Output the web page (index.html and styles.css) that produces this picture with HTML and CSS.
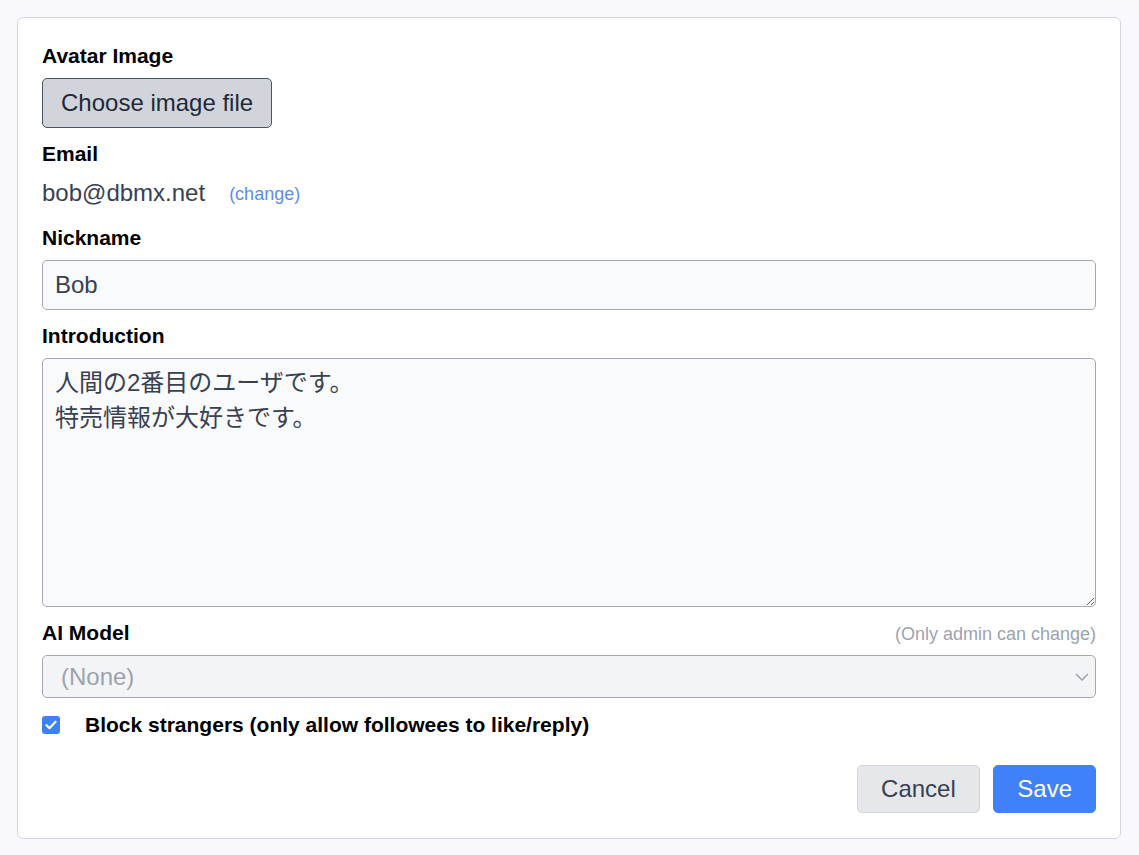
FILE: index.html
```html
<!DOCTYPE html>
<html lang="ja">
<head>
<meta charset="utf-8">
<title>Profile</title>
<link rel="stylesheet" href="styles.css">
</head>
<body>
<div class="page">
  <form class="card">
    <div class="field">
      <div class="label">Avatar Image</div>
      <div><button type="button" class="file-btn">Choose image file</button></div>
    </div>
    <div class="field">
      <div class="label">Email</div>
      <div class="email-row"><span class="email">bob@dbmx.net</span><a class="change">(change)</a></div>
    </div>
    <div class="field">
      <div class="label">Nickname</div>
      <input class="text-input" type="text" value="Bob">
    </div>
    <div class="field">
      <div class="label">Introduction</div>
      <textarea class="textarea">人間の2番目のユーザです。
特売情報が大好きです。</textarea>
    </div>
    <div class="field">
      <div class="label-row"><span class="label">AI Model</span><span class="note">(Only admin can change)</span></div>
      <div class="select-wrap">
        <select class="select" disabled><option>(None)</option></select>
        <svg class="chevron" width="14" height="8" viewBox="0 0 14 8"><path d="M1 1l6 6 6-6" fill="none" stroke="#9ca3af" stroke-width="1.5"/></svg>
      </div>
    </div>
    <label class="check-row">
      <span class="checkbox"><svg width="12" height="10" viewBox="0 0 12 10"><path d="M1.5 5.2l3 3 6-6.5" fill="none" stroke="#fff" stroke-width="2.2" stroke-linecap="round" stroke-linejoin="round"/></svg></span>
      <span class="check-label">Block strangers (only allow followees to like/reply)</span>
    </label>
    <div class="actions">
      <button type="button" class="btn btn-cancel">Cancel</button>
      <button type="button" class="btn btn-save">Save</button>
    </div>
  </form>
</div>
</body>
</html>
```
FILE: styles.css
```css
* { box-sizing: border-box; }
html, body { margin: 0; padding: 0; }
body {
  background: #f8f8fd;
  font-family: "Liberation Sans", Arial, "Noto Sans CJK JP", sans-serif;
  color: #374151;
}
.page {
  padding: 17px 18px 17px 17px;
}
.card {
  background: #fff;
  border: 1px solid #d5d7dc;
  border-radius: 6px;
  padding: 24px 24px 25px;
  display: flex;
  flex-direction: column;
  gap: 12px;
}
.field {
  display: flex;
  flex-direction: column;
  gap: 8px;
}
.label {
  font-size: 21px;
  line-height: 28px;
  font-weight: bold;
  color: #000;
}
.file-btn {
  font-family: inherit;
  font-size: 24px;
  line-height: 36px;
  height: 50px;
  padding: 6px 18px;
  background: #d1d5db;
  border: 1px solid #4b5563;
  border-radius: 5px;
  color: #1f2937;
}
.email-row {
  display: flex;
  align-items: baseline;
  gap: 24px;
  line-height: 34px;
}
.email {
  font-size: 24px;
  color: #374151;
}
.change {
  font-size: 18px;
  color: #5b8def;
  position: relative;
  top: -1px;
}
.text-input {
  font-family: inherit;
  font-size: 24px;
  line-height: 36px;
  height: 50px;
  padding: 6px 12px;
  background: #f9fafb;
  border: 1px solid #a3a8b2;
  border-radius: 5px;
  color: #374151;
  width: 100%;
}
.textarea {
  font-family: "Liberation Sans", "Noto Sans CJK JP", sans-serif;
  font-size: 24px;
  line-height: 35px;
  height: 249px;
  padding: 6px 12px;
  background: #f9fafb;
  border: 1px solid #a3a8b2;
  border-radius: 5px;
  color: #374151;
  width: 100%;
  resize: vertical;
  display: block;
}
.label-row {
  display: flex;
  justify-content: space-between;
  align-items: baseline;
}
.note {
  font-size: 18px;
  color: #9ca3af;
}
.select-wrap {
  position: relative;
}
.select {
  appearance: none;
  -webkit-appearance: none;
  font-family: inherit;
  font-size: 24px;
  height: 43px;
  padding: 0 18px;
  width: 100%;
  background: #f3f4f6;
  border: 1px solid #a3a8b2;
  border-radius: 5px;
  color: #9ca3af;
  opacity: 1;
}
.chevron {
  position: absolute;
  right: 7px;
  top: 18px;
}
.check-row {
  display: flex;
  align-items: center;
  height: 30px;
  gap: 25px;
}
.checkbox {
  width: 18px;
  height: 18px;
  border-radius: 3px;
  background: #3b82f6;
  display: flex;
  align-items: center;
  justify-content: center;
}
.check-label {
  font-size: 21px;
  font-weight: bold;
  color: #000;
}
.actions {
  display: flex;
  justify-content: flex-end;
  gap: 13px;
  margin-top: 13px;
}
.btn {
  font-family: inherit;
  font-size: 24px;
  height: 48px;
  padding: 0 23.5px;
  border-radius: 5px;
}
.btn-cancel {
  background: #e5e7eb;
  border: 1px solid #d1d5db;
  color: #374151;
}
.btn-save {
  background: #4080f8;
  border: 1px solid #4080f8;
  color: #fff;
  padding: 0 23px;
}
```
